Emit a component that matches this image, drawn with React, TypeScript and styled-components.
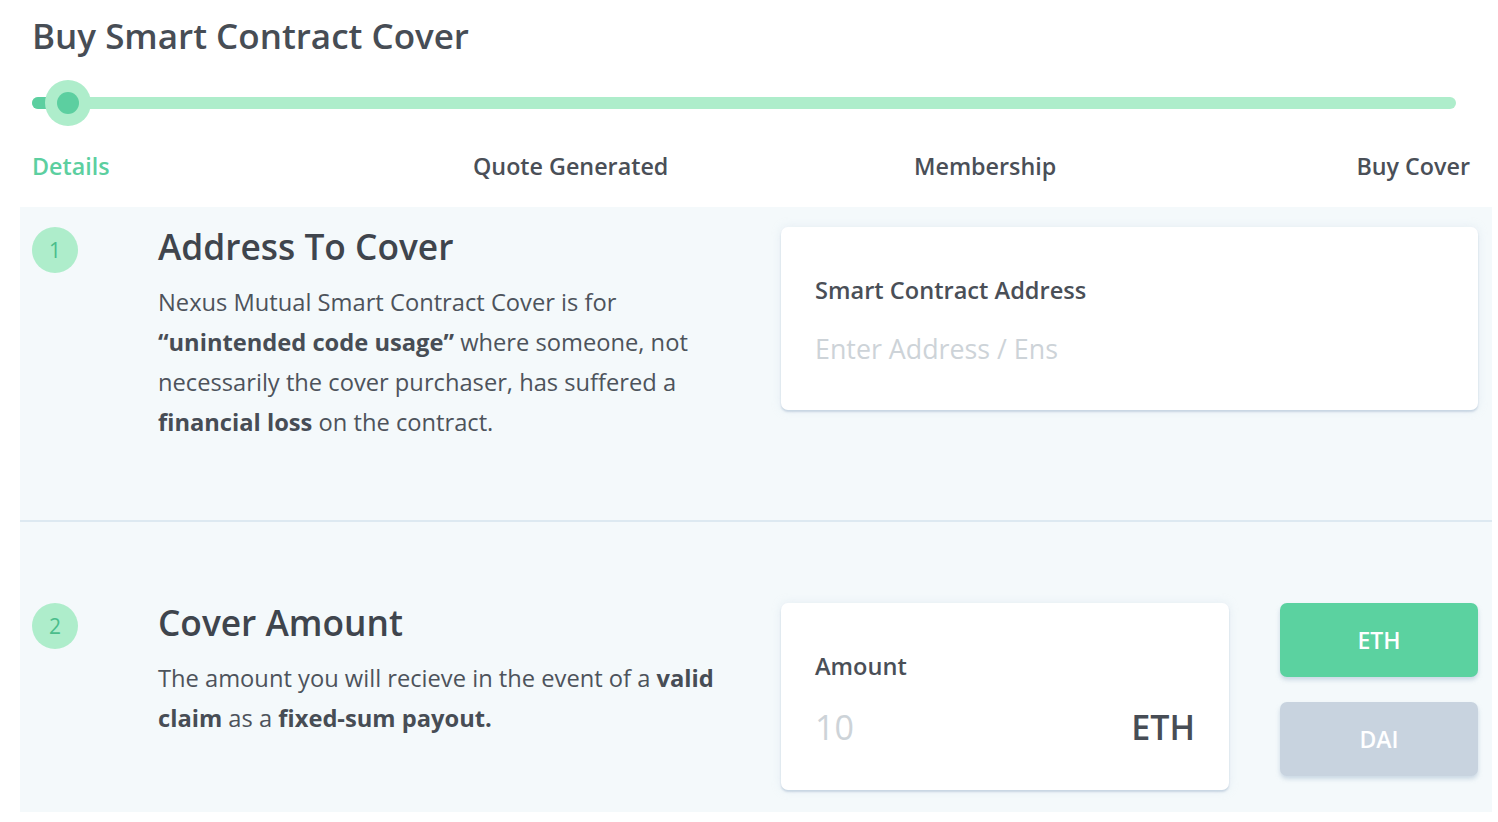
import React from "react";
import styled, { createGlobalStyle } from "styled-components";

const Global = createGlobalStyle`
  html, body { margin: 0; padding: 0; background: #ffffff; }
  body { font-family: "Open Sans", "Noto Sans", sans-serif; color: #474d55; }
  * { box-sizing: border-box; }
`;

const Page = styled.div`
  width: 1498px;
  height: 822px;
  padding: 0 6px 0 20px;
  overflow: hidden;
`;

const Header = styled.header`
  padding: 12px 22px 0 12px;
`;

const Title = styled.h1`
  margin: 0;
  font-size: 35px;
  line-height: 48px;
  font-weight: 600;
  color: #474d55;
`;

const Track = styled.div`
  position: relative;
  margin: 37px 14px 0 0;
  height: 12px;
  border-radius: 6px;
  background: #aeedcb;
`;

const TrackFill = styled.div`
  height: 12px;
  border-radius: 6px;
  background: #5ccfa0;
`;

const Knob = styled.div`
  position: absolute;
  top: 50%;
  width: 46px;
  height: 46px;
  margin: -23px 0 0 -23px;
  border-radius: 50%;
  background: #aeedcb;
  display: flex;
  align-items: center;
  justify-content: center;
  &::after {
    content: "";
    width: 22px;
    height: 22px;
    border-radius: 50%;
    background: #5ccfa0;
  }
`;

const StepLabels = styled.div`
  display: grid;
  grid-template-columns: repeat(3, 441px) 1fr;
  margin-top: 42px;
  height: 56px;
`;

const StepLabel = styled.div<{ $active?: boolean; $end?: boolean }>`
  font-size: 23.3px;
  line-height: 30px;
  font-weight: 600;
  white-space: nowrap;
  color: ${(p) => (p.$active ? "#5ccfa0" : "#4a4f57")};
  justify-self: ${(p) => (p.$end ? "end" : "start")};
`;

const Section = styled.section<{ $top: number; $height: number; $divider?: boolean }>`
  display: grid;
  grid-template-columns: 138px 623px 1fr;
  align-items: start;
  height: ${(p) => p.$height}px;
  padding: ${(p) => p.$top}px 14px 0 0;
  background: #f4f9fb;
  border-bottom: ${(p) => (p.$divider ? "2px solid #dde9f1" : "none")};
`;

const StepCircle = styled.div`
  margin-left: 12px;
  width: 46px;
  height: 46px;
  border-radius: 50%;
  background: #aeedcb;
  color: #4bbd8b;
  font-size: 21px;
  font-weight: 500;
  display: flex;
  align-items: center;
  justify-content: center;
`;

const Copy = styled.div`
  margin-top: -5px;
`;

const Heading = styled.h2`
  margin: 0;
  font-size: 35.3px;
  line-height: 48px;
  font-weight: 600;
  color: #3f454d;
`;

const Body = styled.p`
  margin: 12px 0 0;
  font-size: 23.7px;
  line-height: 40px;
  color: #4d535b;
  strong { font-weight: 700; color: #474d55; }
`;

const Card = styled.div`
  background: #ffffff;
  border-radius: 7px;
  padding: 47px 34px 0;
  box-shadow: 0 2px 2px rgba(170, 190, 210, 0.55), 0 0 10px rgba(200, 215, 228, 0.35);
`;

const AddressCard = styled(Card)`
  height: 183px;
`;

const FieldLabel = styled.div`
  font-size: 23.6px;
  line-height: 32px;
  font-weight: 600;
  color: #4a4f57;
`;

const Placeholder = styled.div<{ $size: number }>`
  margin-top: ${(p) => (p.$size > 30 ? 25 : 23)}px;
  font-size: ${(p) => p.$size}px;
  line-height: 40px;
  color: #cdd3d8;
`;

const AmountArea = styled.div`
  display: grid;
  grid-template-columns: 448px 1fr;
  column-gap: 51px;
`;

const AmountCard = styled(Card)`
  height: 187px;
`;

const AmountRow = styled.div`
  display: flex;
  justify-content: space-between;
  align-items: center;
`;

const Unit = styled.div`
  margin-top: 25px;
  font-size: 34px;
  line-height: 40px;
  font-weight: 600;
  color: #474d55;
`;

const CurrencyColumn = styled.div`
  display: flex;
  flex-direction: column;
  gap: 25px;
`;

const CurrencyButton = styled.button<{ $selected?: boolean }>`
  height: 74px;
  border: none;
  border-radius: 7px;
  font-family: inherit;
  font-size: 23px;
  font-weight: 600;
  color: #ffffff;
  background: ${(p) => (p.$selected ? "#5bd2a0" : "#c8d3df")};
  box-shadow: 0 3px 4px rgba(170, 190, 210, 0.55);
  cursor: pointer;
`;

export default function App() {
  return (
    <Page>
      <Global />
      <Header>
        <Title>Buy Smart Contract Cover</Title>
        <Track>
          <TrackFill style={{ width: 36 }} />
          <Knob style={{ left: 36 }} />
        </Track>
        <StepLabels>
          <StepLabel $active>Details</StepLabel>
          <StepLabel>Quote Generated</StepLabel>
          <StepLabel>Membership</StepLabel>
          <StepLabel $end>Buy Cover</StepLabel>
        </StepLabels>
      </Header>

      <Section $top={20} $height={315} $divider>
        <StepCircle>1</StepCircle>
        <Copy>
          <Heading>Address To Cover</Heading>
          <Body>
            Nexus Mutual Smart Contract Cover is for
            <br />
            <strong>“unintended code usage”</strong> where someone, not
            <br />
            necessarily the cover purchaser, has suffered a
            <br />
            <strong>financial loss</strong> on the contract.
          </Body>
        </Copy>
        <AddressCard>
          <FieldLabel>Smart Contract Address</FieldLabel>
          <Placeholder $size={26.8}>Enter Address / Ens</Placeholder>
        </AddressCard>
      </Section>

      <Section $top={81} $height={290}>
        <StepCircle>2</StepCircle>
        <Copy>
          <Heading>Cover Amount</Heading>
          <Body>
            The amount you will recieve in the event of a <strong>valid</strong>
            <br />
            <strong>claim</strong> as a <strong>fixed-sum payout.</strong>
          </Body>
        </Copy>
        <AmountArea>
          <AmountCard>
            <FieldLabel>Amount</FieldLabel>
            <AmountRow>
              <Placeholder $size={34}>10</Placeholder>
              <Unit>ETH</Unit>
            </AmountRow>
          </AmountCard>
          <CurrencyColumn>
            <CurrencyButton $selected>ETH</CurrencyButton>
            <CurrencyButton>DAI</CurrencyButton>
          </CurrencyColumn>
        </AmountArea>
      </Section>
    </Page>
  );
}
